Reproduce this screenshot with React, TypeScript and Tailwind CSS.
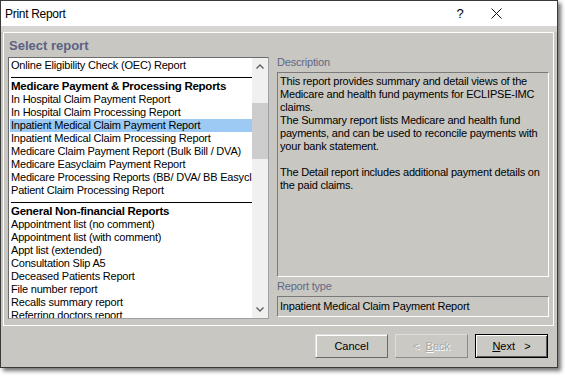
import React from 'react'

type Row = { label: string; kind?: 'head' | 'item'; selected?: boolean }

const rows: Row[] = [
  { label: 'Online Eligibility Check (OEC) Report' },
  { label: 'Medicare Payment & Processing Reports', kind: 'head' },
  { label: 'In Hospital Claim Payment Report' },
  { label: 'In Hospital Claim Processing Report' },
  { label: 'Inpatient Medical Claim Payment Report', selected: true },
  { label: 'Inpatient Medical Claim Processing Report' },
  { label: 'Medicare Claim Payment Report (Bulk Bill / DVA)' },
  { label: 'Medicare Easyclaim Payment Report' },
  { label: 'Medicare Processing Reports (BB/ DVA/ BB Easyclaim)' },
  { label: 'Patient Claim Processing Report' },
  { label: 'General Non-financial Reports', kind: 'head' },
  { label: 'Appointment list (no comment)' },
  { label: 'Appointment list (with comment)' },
  { label: 'Appt list (extended)' },
  { label: 'Consultation Slip A5' },
  { label: 'Deceased Patients Report' },
  { label: 'File number report' },
  { label: 'Recalls summary report' },
  { label: 'Referring doctors report' },
]

const description = [
  'This report provides summary and detail views of the',
  'Medicare and health fund payments for ECLIPSE-IMC',
  'claims.',
  'The Summary report lists Medicare and health fund',
  'payments, and can be used to reconcile payments with',
  'your bank statement.',
  '',
  'The Detail report includes additional payment details on',
  'the paid claims.',
]

export default function App() {
  return (
    <div className="w-[565px] h-[376px] bg-white overflow-hidden font-['Liberation_Sans',Arial,sans-serif] text-black">
      <div className="w-[558px] h-[368px] border border-[#3a3a3a] bg-[#c9c7c2] shadow-[3px_3px_4px_rgba(0,0,0,0.55)] flex flex-col">
        {/* title bar */}
        <div className="h-[25px] bg-white flex items-center pl-[4px] shrink-0">
          <span className="text-[12px] tracking-[-0.3px]">Print Report</span>
          <span className="ml-auto text-[13px] w-[10px] text-center">?</span>
          <XIcon className="ml-[26px] mr-[55px] w-[11px] h-[11px]" />
        </div>
        <div className="h-[6px] bg-[#d6d5d2] shrink-0" />

        {/* main panel */}
        <div className="ml-[2px] mr-[3px] h-[294px] border border-white flex pl-[4px] shrink-0">
          <div className="flex flex-col w-[261px]">
            <div className="h-[24px] pt-[5px] pl-[1px] text-[13px] font-bold text-[#5b6283] leading-[16px]">
              Select report
            </div>
            <div className="h-[262px] border border-t-[#6b6b6b] border-l-[#6b6b6b] border-b-[#a0a0a0] border-r-[#a0a0a0] bg-white flex overflow-hidden">
              <div className="flex-1 pt-[1px] overflow-hidden text-[11px] tracking-[-0.2px]">
                {rows.map((r) =>
                  r.kind === 'head' ? (
                    <div key={r.label} className="pt-[5px]">
                      <div className="h-px bg-black ml-[2px]" />
                      <div className="mt-[1px] h-[14px] leading-[14px] pl-[2px] font-bold text-[11.5px] tracking-[-0.25px] whitespace-nowrap">
                        {r.label}
                      </div>
                    </div>
                  ) : (
                    <div
                      key={r.label}
                      className={
                        r.selected
                          ? 'h-[13px] leading-[13px] ml-[1px] pl-[1px] bg-[#9ccaf5] whitespace-nowrap'
                          : 'h-[13px] leading-[13px] pl-[2px] whitespace-nowrap'
                      }
                    >
                      {r.label}
                    </div>
                  ),
                )}
              </div>
              <div className="w-[16px] bg-[#f0f0f0] flex flex-col items-center shrink-0">
                <div className="h-[17px] flex items-center justify-center">
                  <Chevron up />
                </div>
                <div className="h-[28px]" />
                <div className="w-[16px] h-[56px] bg-[#cdcdcd]" />
                <div className="flex-1" />
                <div className="h-[17px] flex items-center justify-center">
                  <Chevron />
                </div>
              </div>
            </div>
          </div>

          <div className="ml-[8px] w-[272px] flex flex-col pt-[22px] text-[11px] tracking-[-0.2px]">
            <div className="h-[14px] leading-[14px] text-[#5f6787]">Description</div>
            <div className="mt-[3px] h-[205px] border border-t-[#7a7a7a] border-l-[#7a7a7a] border-b-white border-r-white pl-[2px] pt-[2px] leading-[13px]">
              {description.map((line, i) => (
                <div key={i} className="h-[13px] whitespace-nowrap">
                  {line}
                </div>
              ))}
            </div>
            <div className="mt-[2px] h-[14px] leading-[14px] text-[#5f6787]">Report type</div>
            <div className="mt-[3px] h-[21px] border border-t-[#7a7a7a] border-l-[#7a7a7a] border-b-white border-r-white pl-[2px] flex items-center">
              Inpatient Medical Claim Payment Report
            </div>
          </div>
        </div>

        {/* buttons */}
        <div className="flex-1 flex justify-end items-start pt-[8px] pr-[9px] gap-[7px] text-[11px]">
          <button className="w-[73px] h-[24px] border border-t-[#dedede] border-l-[#dedede] border-b-[#6a6a6a] border-r-[#6a6a6a] bg-[#cbc9c4] shadow-[inset_1px_1px_0_#ffffff]">
            Cancel
          </button>
          <button className="w-[73px] h-[24px] border border-t-[#dedede] border-l-[#dedede] border-b-[#8a8a8a] border-r-[#8a8a8a] bg-[#cbc9c4] text-[#a8a8a8] [text-shadow:1px_1px_0_#ffffff]">
            &lt;&nbsp;&nbsp;<span className="underline">B</span>ack
          </button>
          <button className="w-[73px] h-[24px] border border-black bg-[#cbc9c4] shadow-[inset_1px_1px_0_#ffffff,inset_-1px_-1px_0_#5a5a5a]">
            <span className="underline">N</span>ext&nbsp;&nbsp;&nbsp;&gt;
          </button>
        </div>
      </div>
    </div>
  )
}

function Chevron({ up }: { up?: boolean }) {
  return (
    <svg width="8" height="5" viewBox="0 0 8 5" fill="none" stroke="#606060" strokeWidth="1.4">
      {up ? <polyline points="0.5,4.5 4,1 7.5,4.5" /> : <polyline points="0.5,0.5 4,4 7.5,0.5" />}
    </svg>
  )
}

function XIcon(props: { className?: string }) {
  return (
    <svg {...props} viewBox="0 0 11 11" fill="none" stroke="#111" strokeWidth="1">
      <line x1="0.5" y1="0.5" x2="10.5" y2="10.5" />
      <line x1="10.5" y1="0.5" x2="0.5" y2="10.5" />
    </svg>
  )
}
